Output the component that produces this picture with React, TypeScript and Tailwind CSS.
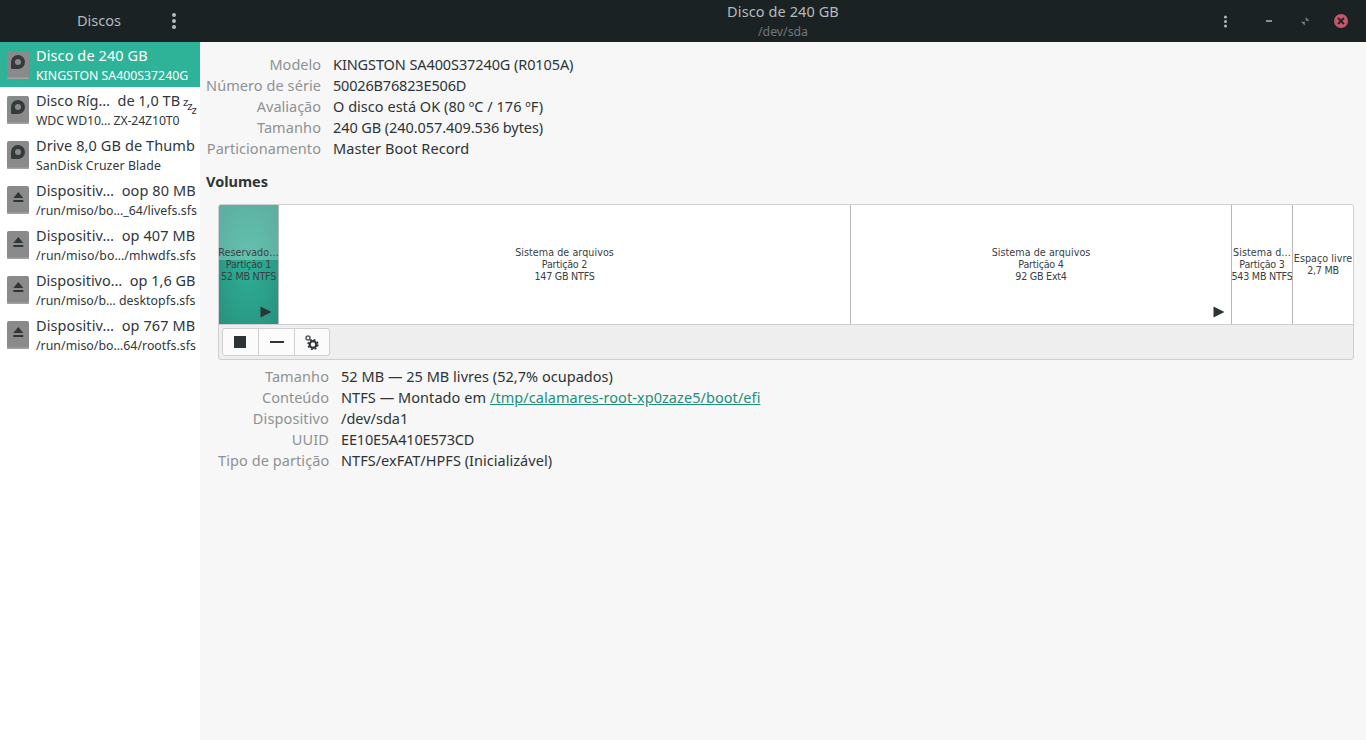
import React from "react";

const font = { fontFamily: '"Noto Sans", sans-serif' };

function DiskIcon() {
  return (
    <svg width="24" height="30" viewBox="0 0 24 30" className="shrink-0">
      <rect x="1" y="1" width="22" height="28" rx="2" fill="#8a8a8a" />
      <rect x="1" y="27.500" width="22" height="1.500" rx="0.700" fill="#a3a3a3" />
      <path fillRule="evenodd" d="M12 5a7 7 0 0 1 0 14H6a1 1 0 0 1-1-1V12a7 7 0 0 1 7-7zm0 4a3 3 0 1 0 0 6 3 3 0 0 0 0-6z" fill="#333b3d" />
    </svg>
  );
}

function EjectIcon() {
  return (
    <svg width="24" height="30" viewBox="0 0 24 30" className="shrink-0">
      <rect x="1" y="1" width="22" height="28" rx="2" fill="#8a8a8a" />
      <rect x="1" y="27.500" width="22" height="1.500" rx="0.700" fill="#a3a3a3" />
      <path d="M12.300 7l5 6h-10z" fill="#2f3639" />
      <rect x="7.300" y="15" width="10" height="2" fill="#2f3639" />
    </svg>
  );
}

const rows = [
  { t1: "Disco de 240 GB", t2: "KINGSTON SA400S37240G", icon: "disk", active: true, c1: "tracking-[0.1px]", c2: "tracking-[0px]" },
  { t1: "Disco Ríg…  de 1,0 TB", t2: "WDC WD10… ZX-24Z10T0", icon: "disk", sleep: true, c1: "tracking-[0px]", c2: "tracking-[-0.13px]" },
  { t1: "Drive 8,0 GB de Thumb", t2: "SanDisk Cruzer Blade", icon: "disk", c1: "tracking-[0.1px]", c2: "tracking-[0.1px]" },
  { t1: "Dispositiv…  oop 80 MB", t2: "/run/miso/bo…_64/livefs.sfs", icon: "eject", c1: "tracking-[0.1px]", c2: "tracking-[0.04px]" },
  { t1: "Dispositiv…  op 407 MB", t2: "/run/miso/bo…/mhwdfs.sfs", icon: "eject", c1: "tracking-[0.1px]", c2: "tracking-[0.12px]" },
  { t1: "Dispositivo…  op 1,6 GB", t2: "/run/miso/b… desktopfs.sfs", icon: "eject", c1: "tracking-[0px]", c2: "tracking-[0.04px]" },
  { t1: "Dispositiv…  op 767 MB", t2: "/run/miso/bo…64/rootfs.sfs", icon: "eject", c1: "tracking-[0.1px]", c2: "tracking-[0.04px]" },
];

function Row({ r }: { r: (typeof rows)[number] }) {
  return (
    <div className={`relative flex h-[45px] items-center pl-[6px] gap-[6px] ${r.active ? "bg-[#2eb398] text-white" : "text-[#31363b]"}`}>
      {r.icon === "disk" ? <DiskIcon /> : <EjectIcon />}
      <div className="min-w-0 whitespace-pre">
        <div className={`text-[14.5px] leading-[20px] ${r.c1}`}>{r.t1}</div>
        <div className={`text-[12.3px] leading-[18px] mt-[2px] ${r.c2}`}>{r.t2}</div>
      </div>
      {r.sleep && (
        <span className="absolute left-[183px] top-[11px] flex text-[#2e3436]" style={{ fontFamily: '"DejaVu Sans", sans-serif' }}>
          <span className="text-[10px] leading-[10px]">z</span>
          <span className="text-[10px] leading-[10px] mt-[4px] -ml-[1px]">z</span>
          <span className="text-[10px] leading-[10px] mt-[8px] -ml-[1px]">z</span>
        </span>
      )}
    </div>
  );
}

type Item = { k: string; v: React.ReactNode; kc?: string; vc?: string };

function Info({ items, labelW }: { items: Item[]; labelW: string }) {
  return (
    <div className={`grid ${labelW} gap-x-[12px] text-[14.5px] leading-[21px]`}>
      {items.map(({ k, v, kc, vc }) => (
        <React.Fragment key={k}>
          <div className={`text-right text-[#8e9294] whitespace-nowrap ${kc ?? ""}`}>{k}</div>
          <div className={`text-[#2e3436] whitespace-nowrap ${vc ?? ""}`}>{v}</div>
        </React.Fragment>
      ))}
    </div>
  );
}

function Segment({ w, lines, arrow, selected, last }: { w: string; lines: string[]; arrow?: boolean; selected?: boolean; last?: boolean }) {
  return (
    <div className={`relative ${w} h-full shrink-0 flex flex-col items-center justify-center overflow-hidden text-[9.6px] leading-[12px] whitespace-nowrap text-[#3a4042] ${last ? "" : "border-r border-[#b8b8b8]"} ${selected ? "bg-[radial-gradient(ellipse_at_center,#2fb096,#27917e)]" : "bg-white"}`} style={{ fontFamily: '"DejaVu Sans", sans-serif' }}>
      {selected && <div className="absolute inset-x-0 top-0 h-[55px] bg-white/25" />}
      {lines.map((l) => (
        <div key={l} className={`relative ${/\d/.test(l) ? "tracking-[-0.25px]" : "tracking-[0.05px]"}`}>{l}</div>
      ))}
      {arrow && (
        <svg width="12" height="12" viewBox="0 0 12 12" className="absolute right-[6px] bottom-[6px]">
          <path d="M0.500 0.500L11.500 6L0.500 11.500z" fill="#2e3436" />
        </svg>
      )}
    </div>
  );
}

export default function App() {
  return (
    <div className="h-[740px] w-[1366px] flex flex-col overflow-hidden bg-[#f7f7f7]" style={font}>
      <header className="relative h-[42px] shrink-0 flex bg-[#1b2224] text-[#b6babb]">
        <div className="w-[200px] shrink-0 relative flex items-center">
          <span className="ml-[77px] text-[14.5px]">Discos</span>
          <svg width="6" height="18" viewBox="0 0 6 18" className="absolute left-[171px] top-[12px]" fill="#b6babb">
            <circle cx="3" cy="3" r="2" /><circle cx="3" cy="9" r="2" /><circle cx="3" cy="15" r="2" />
          </svg>
        </div>
        <div className="flex-1 flex flex-col items-center pt-[1px]">
          <div className="text-[14.5px] leading-[20px] tracking-[0.1px] text-[#b6babb]">Disco de 240 GB</div>
          <div className="text-[12.3px] leading-[18px] mt-[2px] text-[#70767a]">/dev/sda</div>
        </div>
        <svg width="5" height="13" viewBox="0 0 5 13" fill="#b6babb" className="absolute left-[1223px] top-[15px]">
          <circle cx="2.500" cy="2" r="1.500" /><circle cx="2.500" cy="6.500" r="1.500" /><circle cx="2.500" cy="11" r="1.500" />
        </svg>
        <div className="absolute left-[1266px] top-[20px] h-[2px] w-[6px] bg-[#8b8f90]" />
        <svg width="9" height="9" viewBox="0 0 9 9" className="absolute left-[1301px] top-[17px]" fill="#7a7f81">
          <path d="M4.700 0L8.500 3.800H4.700zM0 4.800H3.800V8.600z" />
        </svg>
        <div className="absolute left-[1334px] top-[14px] h-[14px] w-[14px] rounded-full bg-[#c4586a] flex items-center justify-center">
          <svg width="8" height="8" viewBox="0 0 8 8" stroke="#2a2326" strokeWidth="1.800"><path d="M1 1l6 6M7 1l-6 6" /></svg>
        </div>
      </header>
      <div className="flex-1 flex min-h-0">
        <aside className="w-[200px] shrink-0 bg-white">
          {rows.map((r) => <Row key={r.t1} r={r} />)}
        </aside>
        <main className="flex-1 pl-[6px] pr-[12px] pt-[12px] min-w-0">
          <Info labelW="grid-cols-[115px_1fr]" items={[
            { k: "Modelo", v: "KINGSTON SA400S37240G (R0105A)", vc: "tracking-[-0.1px]" },
            { k: "Número de série", v: "50026B76823E506D", kc: "tracking-[0.07px]", vc: "tracking-[-0.17px]" },
            { k: "Avaliação", v: "O disco está OK (80 ºC / 176 ºF)", vc: "tracking-[0.03px]" },
            { k: "Tamanho", v: "240 GB (240.057.409.536 bytes)", kc: "tracking-[0.1px]", vc: "tracking-[-0.08px]" },
            { k: "Particionamento", v: "Master Boot Record", kc: "tracking-[0.07px]", vc: "tracking-[0.08px]" },
          ]} />
          <div className="mt-[12px] text-[14.5px] leading-[21px] font-bold text-[#2e3436]">Volumes</div>
          <div className="ml-[12px] mt-[12px] h-[156px] rounded-[3px] border border-[#cfcfcf] bg-[#eeeeee] overflow-hidden">
            <div className="h-[120px] flex border-b border-[#cfcfcf]">
              <Segment w="w-[60px]" selected arrow lines={["Reservado…", "Partição 1", "52 MB NTFS"]} />
              <Segment w="w-[572px]" lines={["Sistema de arquivos", "Partição 2", "147 GB NTFS"]} />
              <Segment w="w-[381px]" arrow lines={["Sistema de arquivos", "Partição 4", "92 GB Ext4"]} />
              <Segment w="w-[61px]" lines={["Sistema d…", "Partição 3", "543 MB NTFS"]} />
              <Segment w="w-[60px]" last lines={["Espaço livre", "2,7 MB"]} />
            </div>
            <div className="pl-[3px] pt-[3px]">
              <div className="w-[108px] h-[28px] flex rounded-[3px] border border-[#cfcfcf] bg-[#fbfbfb]">
                <div className="w-[36px] flex items-center justify-center border-r border-[#cfcfcf]"><div className="w-[12px] h-[12px] -ml-[1px] bg-[#2e3436]" /></div>
                <div className="w-[36px] flex items-center justify-center border-r border-[#cfcfcf]"><div className="w-[14px] h-[2px] bg-[#2e3436]" /></div>
                <div className="flex-1 flex items-center justify-center">
                  <svg width="14" height="15" viewBox="0 0 14 15" className="-ml-[1px]">
                    <circle cx="3" cy="3" r="2" fill="none" stroke="#555c5e" strokeWidth="1.500" />
                    <circle cx="8" cy="9.500" r="3.300" fill="none" stroke="#2e3436" strokeWidth="2.200" />
                    <circle cx="8" cy="9.500" r="4.900" fill="none" stroke="#2e3436" strokeWidth="1.500" strokeDasharray="2 1.850" />
                  </svg>
                </div>
              </div>
            </div>
          </div>
          <div className="ml-[12px] mt-[6px]">
            <Info labelW="grid-cols-[111px_1fr]" items={[
              { k: "Tamanho", v: "52 MB — 25 MB livres (52,7% ocupados)", kc: "tracking-[0.1px]", vc: "tracking-[0.03px]" },
              { k: "Conteúdo", v: <>NTFS — Montado em <span className="text-[#1f8f79] underline">/tmp/calamares-root-xp0zaze5/boot/efi</span></>, vc: "tracking-[0.06px]" },
              { k: "Dispositivo", v: "/dev/sda1", kc: "tracking-[0.13px]" },
              { k: "UUID", v: "EE10E5A410E573CD", kc: "tracking-[0.15px]", vc: "tracking-[-0.17px]" },
              { k: "Tipo de partição", v: "NTFS/exFAT/HPFS (Inicializável)", kc: "tracking-[0.08px]", vc: "tracking-[0.03px]" },
            ]} />
          </div>
        </main>
      </div>
    </div>
  );
}
